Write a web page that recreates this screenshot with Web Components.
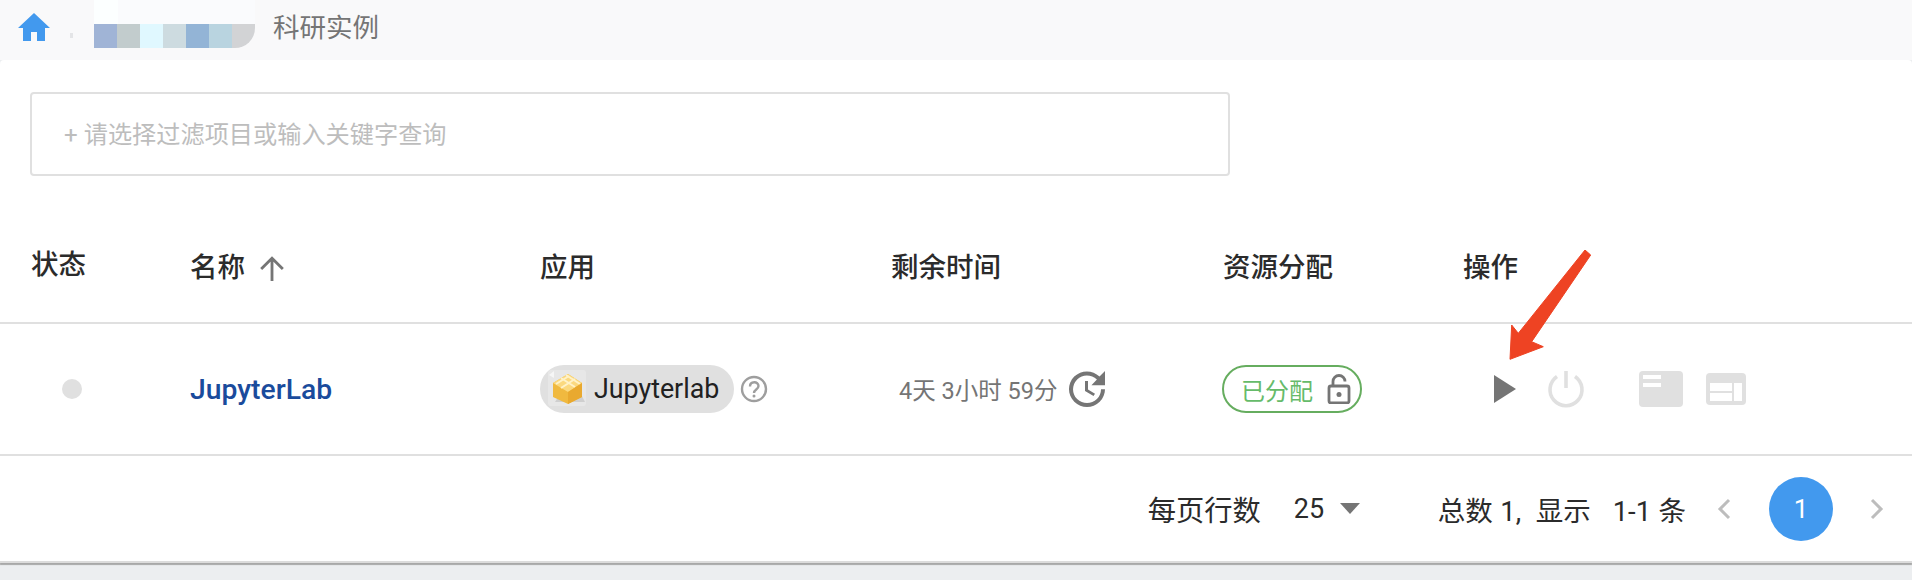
<!DOCTYPE html>
<html lang="zh">
<head>
<meta charset="utf-8">
<title>科研实例</title>
<style>
  html, body { margin: 0; height: 100%; }
  body {
    background: #eceef0;
    font-family: Roboto, "Noto Sans CJK SC", sans-serif;
    overflow: hidden;
  }
</style>
</head>
<body>
<app-breadcrumb>科研实例</app-breadcrumb>
<instance-card>
  <filter-box placeholder="+ 请选择过滤项目或输入关键字查询"></filter-box>
  <instance-table></instance-table>
  <table-pager></table-pager>
</instance-card>
<script>
(() => {
  class AppBreadcrumb extends HTMLElement {
    constructor() {
      super();
      this.attachShadow({ mode: 'open' }).innerHTML = `
        <style>
          :host {
            display: flex;
            align-items: flex-start;
            height: 60px;
            background: #f9f9fa;
            box-sizing: border-box;
          }
          .home { width: 34px; height: 30px; margin: 12px 0 0 17px; flex: none; }
          .tick { width: 3px; height: 5px; margin: 33px 0 0 19px; background: #e4e5e7; flex: none; }
          .blur {
            display: flex;
            flex-direction: column;
            width: 161px;
            height: 48px;
            margin-left: 21px;
            flex: none;
            background: #fafbfd;
            border-radius: 0 0 20px 0;
            overflow: hidden;
          }
          .blur .top { height: 24px; display: flex; }
          .blur .top i { width: 24px; background: #fcffff; }
          .blur .px { height: 24px; display: flex; }
          .blur .px i { display: block; flex: 1; }
          .label {
            margin-left: 18px;
            font-size: 26.5px;
            line-height: 55px;
            color: #757575;
          }
        </style>
        <svg class="home" viewBox="0 0 34 30"><path d="M17 1 1 16h5v13h8v-9h6v9h8V16h5z" fill="#4299ee"/></svg>
        <span class="tick"></span>
        <div class="blur">
          <div class="top"><i></i></div>
          <div class="px">
            <i style="background:#a0b4d6"></i><i style="background:#c2cccd"></i><i style="background:#e0f8ff"></i>
            <i style="background:#cddbe0"></i><i style="background:#93b4d6"></i><i style="background:#b9d4e0"></i>
            <i style="background:#d2d3d5"></i>
          </div>
        </div>
        <span class="label"><slot></slot></span>
      `;
    }
  }

  class InstanceCard extends HTMLElement {
    constructor() {
      super();
      this.attachShadow({ mode: 'open' }).innerHTML = `
        <style>
          :host {
            display: block;
            position: relative;
            background: #fff;
            border-radius: 4px 4px 0 0;
            padding-top: 32px;
            border-bottom: 2px solid #dcdcdc;
            box-shadow: 0 2px 1px #a8a8a8;
          }
        </style>
        <slot></slot>
      `;
    }
  }

  class FilterBox extends HTMLElement {
    constructor() {
      super();
      this.attachShadow({ mode: 'open' }).innerHTML = `
        <style>
          :host {
            display: flex;
            align-items: center;
            box-sizing: border-box;
            width: 1200px;
            height: 84px;
            margin-left: 30px;
            padding: 0 0 4px 32px;
            border: 2px solid #e0e0e0;
            border-radius: 4px;
            font-size: 24.2px;
            color: #bdbdbd;
          }
        </style>
        <span id="ph"></span>
      `;
    }
    connectedCallback() {
      this.shadowRoot.querySelector('#ph').textContent = this.getAttribute('placeholder');
    }
  }

  class InstanceTable extends HTMLElement {
    constructor() {
      super();
      this.attachShadow({ mode: 'open' }).innerHTML = `
        <style>
          :host {
            display: grid;
            grid-template-columns: 190px 350px 351px 332px 240px 1fr;
            grid-template-rows: 148px 132px;
          }
          .th {
            display: flex;
            align-items: flex-end;
            padding-bottom: 34px;
            font-size: 27.5px;
            line-height: 40px;
            font-weight: 500;
            color: #2b2b2b;
            border-bottom: 2px solid #e0e0e0;
          }
          .th.first { padding-left: 31px; padding-bottom: 37px; }
          .th svg { width: 26px; height: 26px; margin: 0 0 6px 14px; }
          .td {
            display: flex;
            align-items: center;
            border-bottom: 2px solid #e0e0e0;
          }
          .dot { width: 20px; height: 20px; border-radius: 50%; background: #e0e0e0; margin-left: 62px; }
          .name { font-size: 28.3px; font-weight: 500; color: #1a4b9c; }
          .chip {
            display: flex;
            align-items: center;
            height: 48px;
            width: 194px;
            border-radius: 24px;
            background: #e0e0e0;
            box-sizing: border-box;
            padding-left: 8px;
            font-size: 26.8px;
            color: #212121;
          }
          .chip svg { width: 38px; height: 38px; margin-right: 8px; flex: none; }
          .help { width: 28px; height: 28px; margin-left: 6px; }
          .time { font-size: 23.5px; color: #757575; margin-left: 8px; }
          .clock { width: 48px; height: 48px; margin-left: 5px; }
          .alloc {
            display: flex;
            align-items: center;
            box-sizing: border-box;
            width: 140px;
            height: 48px;
            margin-left: -1px;
            border: 2px solid #66ad5f;
            border-radius: 24px;
            padding-left: 17px;
            font-size: 24px;
            color: #66bb6a;
          }
          .alloc svg { width: 24px; height: 30px; margin-left: 14px; }
          .actions { gap: 0; padding-left: 31px; }
          .play { width: 22px; height: 28px; }
          .power { width: 38px; height: 38px; margin-left: 31px; }
          .panel1 { width: 44px; height: 36px; margin-left: 54px; }
          .panel2 { width: 40px; height: 32px; margin-left: 23px; }
          .arrow { position: absolute; left: 1500px; top: 190px; width: 100px; height: 120px; pointer-events: none; }
        </style>
        <div class="th first">状态</div>
        <div class="th">名称<svg viewBox="0 0 24 24"><path d="M12 23V3M2 12 12 2l10 10" fill="none" stroke="#757575" stroke-width="2.6"/></svg></div>
        <div class="th">应用</div>
        <div class="th">剩余时间</div>
        <div class="th">资源分配</div>
        <div class="th">操作</div>

        <div class="td"><span class="dot"></span></div>
        <div class="td"><span class="name">JupyterLab</span></div>
        <div class="td">
          <span class="chip">
            <svg viewBox="0 0 38 38">
              <rect width="38" height="36" rx="3" fill="#e7e7e7"/>
              <path d="M1 5 6 1v7z" fill="#f6f6f6"/>
              <path d="M7 32h30l-4-8H12z" fill="#cfcfcf"/>
              <path d="M5 13 20 4l14 9v14L20 34 5 27z" fill="#f0b93f"/>
              <path d="M5 13 20 4l14 9-14 9z" fill="#fbd97f"/>
              <path d="M13 8l14 9M18 5l14 9M8 14l13-8M13 18l14-9" stroke="#fff2c8" stroke-width="2" fill="none"/>
              <path d="M20 22v12l14-7V13z" fill="#e9a92f"/>
            </svg>
            Jupyterlab
          </span>
          <svg class="help" viewBox="0 0 28 28">
            <circle cx="14" cy="14" r="12" fill="none" stroke="#9e9e9e" stroke-width="2.4"/>
            <path d="M10 11.5c0-5.500 8.500-5.500 8.500-.5 0 3.500-4.500 3.500-4.500 7" fill="none" stroke="#9e9e9e" stroke-width="2.4"/>
            <circle cx="14" cy="21" r="1.5" fill="#9e9e9e"/>
          </svg>
        </div>
        <div class="td">
          <span class="time">4天 3小时 59分</span>
          <svg class="clock" viewBox="0 0 24 24">
            <path d="M21 10.120h-6.780l2.740-2.820c-2.730-2.700-7.150-2.800-9.880-.1-2.730 2.710-2.730 7.080 0 9.790s7.150 2.710 9.880 0C18.320 15.650 19 14.080 19 12.100h2c0 1.980-.88 4.550-2.640 6.290-3.510 3.480-9.210 3.480-12.720 0-3.500-3.470-3.530-9.110-.02-12.580s9.140-3.470 12.650 0L21 3v7.120zM12.500 8v4.250l3.500 2.080-.72 1.210L11 13V8h1.500z" fill="#757575"/>
          </svg>
        </div>
        <div class="td">
          <span class="alloc">已分配
            <svg viewBox="0 0 24 30">
              <path d="M6 12V7.500a6 6 0 0 1 12 0" fill="none" stroke="#757575" stroke-width="2.8"/>
              <rect x="2" y="12" width="20" height="17" rx="2" fill="none" stroke="#757575" stroke-width="2.8"/>
              <circle cx="12" cy="20.5" r="2.5" fill="#757575"/>
            </svg>
          </span>
        </div>
        <div class="td actions">
          <svg class="play" viewBox="0 0 22 28"><path d="M0 0 22 14 0 28z" fill="#757575"/></svg>
          <svg class="power" viewBox="0 0 38 38">
            <path d="M19 1v17" stroke="#e0e0e0" stroke-width="3.6" fill="none"/>
            <path d="M10 6.500a16 16 0 1 0 18 0" fill="none" stroke="#e0e0e0" stroke-width="3.6"/>
          </svg>
          <svg class="panel1" viewBox="0 0 44 36">
            <rect width="44" height="36" rx="4" fill="#e0e0e0"/>
            <rect x="4" y="4" width="18" height="4" fill="#fff"/><rect x="4" y="12" width="18" height="4" fill="#fff"/>
          </svg>
          <svg class="panel2" viewBox="0 0 40 32">
            <rect width="40" height="32" rx="4" fill="#e0e0e0"/>
            <rect x="4" y="10" width="22" height="8" fill="#fff"/><rect x="4" y="20" width="22" height="8" fill="#fff"/>
            <rect x="28" y="10" width="8" height="18" fill="#fff"/>
          </svg>
        </div>
        <svg class="arrow" viewBox="0 0 100 120">
          <path d="M85 0 90.700 5 31.700 91.700 43.300 96.700 10 109.300 11.700 75 18.300 83.300z" fill="#ee4323" stroke="#ee4323" stroke-width="1" stroke-linejoin="round"/>
        </svg>
      `;
    }
  }

  class TablePager extends HTMLElement {
    constructor() {
      super();
      this.attachShadow({ mode: 'open' }).innerHTML = `
        <style>
          :host {
            display: flex;
            align-items: center;
            justify-content: flex-end;
            height: 105px;
            font-size: 26px;
            color: #2b2b2b;
          }
          .rows { margin-right: 33px; font-size: 28.3px; }
          .num { width: 32px; font-size: 27px; }
          .caret { width: 0; height: 0; margin-left: 14px; border: 10px solid transparent; border-top: 11px solid #757575; border-bottom: 0; }
          .total { margin-left: 78px; white-space: pre; font-size: 27.5px; word-spacing: .5px; }
          .chev { width: 14px; height: 22px; }
          .prev { margin-left: 31px; }
          .next { margin: 0 28px 0 37px; }
          .page {
            display: flex; align-items: center; justify-content: center;
            width: 64px; height: 64px; margin-left: 38px;
            border-radius: 50%;
            background: #4299ee;
            color: #fff;
          }
        </style>
        <span class="rows">每页行数</span>
        <span class="num">25</span>
        <span class="caret"></span>
        <span class="total">总数 1,  显示   1-1 条</span>
        <svg class="chev prev" viewBox="0 0 14 22"><path d="M12 2 3 11l9 9" fill="none" stroke="#bdbdbd" stroke-width="3"/></svg>
        <span class="page">1</span>
        <svg class="chev next" viewBox="0 0 14 22"><path d="M2 2l9 9-9 9" fill="none" stroke="#bdbdbd" stroke-width="3"/></svg>
      `;
    }
  }

  customElements.define('app-breadcrumb', AppBreadcrumb);
  customElements.define('instance-card', InstanceCard);
  customElements.define('filter-box', FilterBox);
  customElements.define('instance-table', InstanceTable);
  customElements.define('table-pager', TablePager);
})();
</script>
</body>
</html>
